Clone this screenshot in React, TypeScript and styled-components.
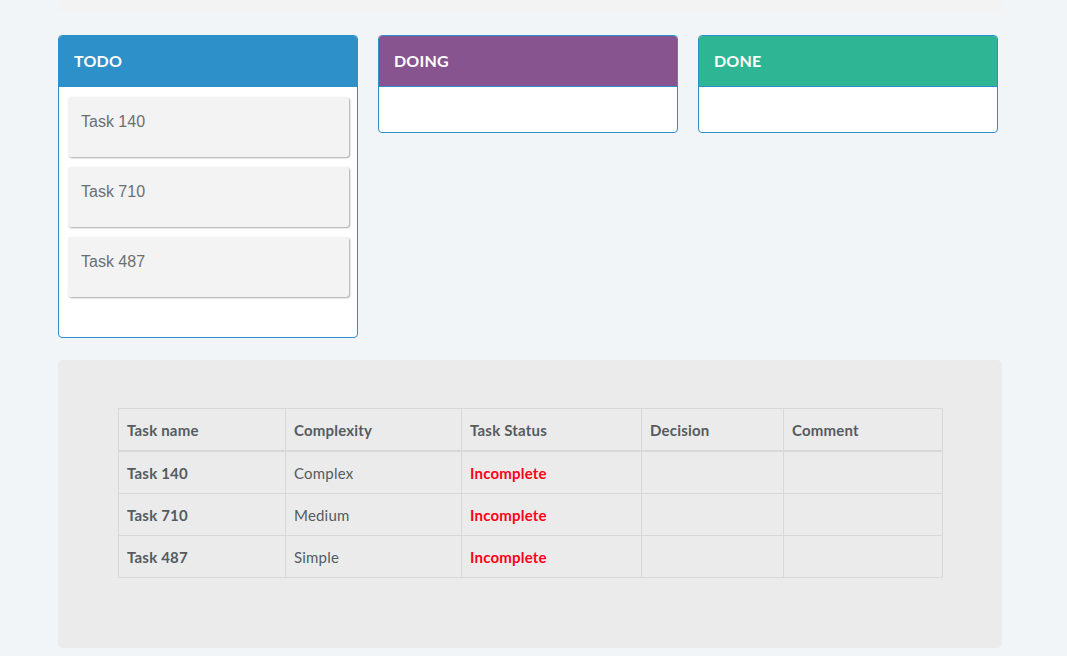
import styled, { createGlobalStyle } from "styled-components";

const GlobalStyle = createGlobalStyle`
  body {
    margin: 0;
    background: #f2f5f8;
    font-family: "Lato", "Liberation Sans", sans-serif;
  }
`;

const Page = styled.div`
  width: 944px;
  margin-left: 58px;
  height: 656px;
  overflow: hidden;
`;

const TopStrip = styled.div`
  height: 13px;
  background: #f3f3f3;
  border-radius: 0 0 5px 5px;
`;

const Board = styled.div`
  display: flex;
  align-items: flex-start;
  gap: 20px;
  margin-top: 22px;
`;

const Column = styled.section`
  width: 300px;
  box-sizing: border-box;
  border: 1px solid #2e90c8;
  border-radius: 4px;
  background: #fff;
  overflow: hidden;
`;

const ColumnHeader = styled.header<{ $color: string }>`
  height: 51px;
  display: flex;
  align-items: center;
  padding: 0 15px 1px;
  box-sizing: border-box;
  background: ${(p) => p.$color};
  border-bottom: 1px solid #2e90c8;
  color: #fff;
  font-family: "Lato", sans-serif;
  font-weight: 700;
  font-size: 16px;
  letter-spacing: 0.2px;
`;

const ColumnBody = styled.div`
  min-height: 45px;
  padding: 10px 8px 0 9px;
  box-sizing: border-box;
`;

const Card = styled.div`
  height: 60px;
  box-sizing: border-box;
  padding: 16px 13px;
  margin-bottom: 10px;
  background: #f3f3f3;
  border-radius: 3px;
  box-shadow: 1px 1px 2px rgba(0, 0, 0, 0.35);
  font-family: "Liberation Sans", Arial, sans-serif;
  font-size: 16px;
  line-height: 18px;
  color: #6a6f75;
`;

const DropZone = styled.div`
  height: 30px;
`;

const Panel = styled.div`
  margin-top: 22px;
  height: 288px;
  box-sizing: border-box;
  padding: 48px 60px 0;
  background: #ebebeb;
  border-radius: 5px;
`;

const Table = styled.table`
  width: 824px;
  table-layout: fixed;
  border-collapse: collapse;
  font-family: "Lato", sans-serif;
  font-size: 15px;
  letter-spacing: 0.2px;
  color: #555b5f;
`;

const Th = styled.th`
  height: 41px;
  padding: 0 8px;
  text-align: left;
  font-weight: 700;
  border: 1px solid #d8d8d8;
  border-bottom-width: 2px;
`;

const Td = styled.td<{ $bold?: boolean; $red?: boolean }>`
  height: 41px;
  padding: 0 8px;
  border: 1px solid #d8d8d8;
  font-weight: ${(p) => (p.$bold ? 700 : 400)};
  color: ${(p) => (p.$red ? "#ff0019" : "#555b5f")};
`;

const columns = [
  { title: "TODO", color: "#2e90c8", tasks: ["Task 140", "Task 710", "Task 487"] },
  { title: "DOING", color: "#87548f", tasks: [] as string[] },
  { title: "DONE", color: "#2eb694", tasks: [] as string[] },
];

const rows = [
  { name: "Task 140", complexity: "Complex" },
  { name: "Task 710", complexity: "Medium" },
  { name: "Task 487", complexity: "Simple" },
];

const headers: [string, number][] = [
  ["Task name", 167],
  ["Complexity", 176],
  ["Task Status", 180],
  ["Decision", 142],
  ["Comment", 159],
];

export default function App() {
  return (
    <>
      <GlobalStyle />
      <Page>
        <TopStrip />
        <Board>
          {columns.map((col) => (
            <Column key={col.title}>
              <ColumnHeader $color={col.color}>{col.title}</ColumnHeader>
              <ColumnBody>
                {col.tasks.map((t) => (
                  <Card key={t}>{t}</Card>
                ))}
                {col.tasks.length > 0 && <DropZone />}
              </ColumnBody>
            </Column>
          ))}
        </Board>
        <Panel>
          <Table>
            <colgroup>
              {headers.map(([h, w]) => (
                <col key={h} style={{ width: w }} />
              ))}
            </colgroup>
            <thead>
              <tr>
                {headers.map(([h]) => (
                  <Th key={h}>{h}</Th>
                ))}
              </tr>
            </thead>
            <tbody>
              {rows.map((r) => (
                <tr key={r.name}>
                  <Td $bold>{r.name}</Td>
                  <Td>{r.complexity}</Td>
                  <Td $bold $red>
                    Incomplete
                  </Td>
                  <Td />
                  <Td />
                </tr>
              ))}
            </tbody>
          </Table>
        </Panel>
      </Page>
    </>
  );
}
